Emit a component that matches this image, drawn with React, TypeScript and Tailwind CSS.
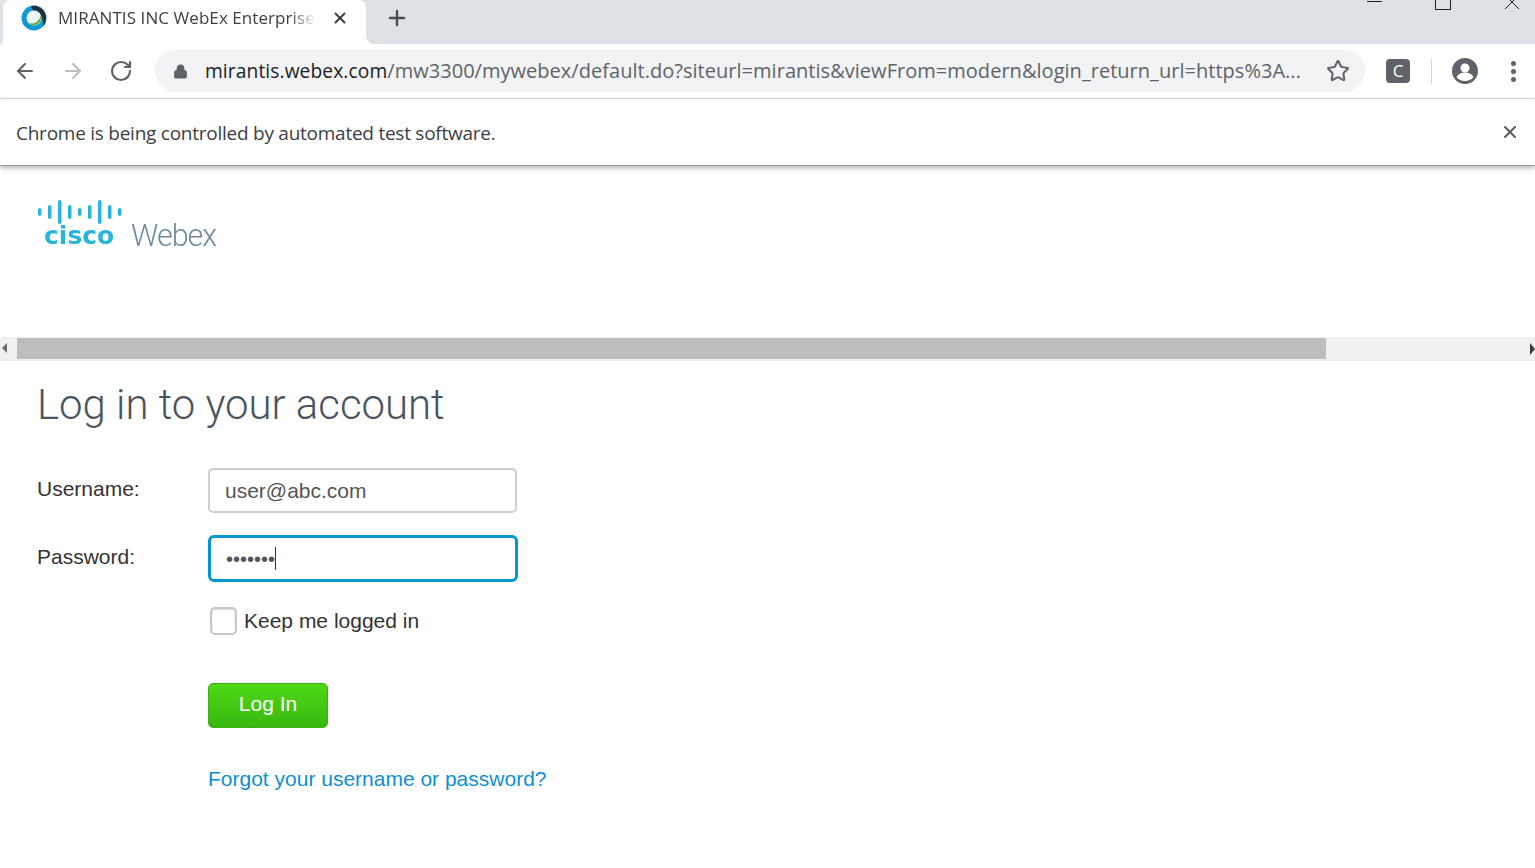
import { ArrowLeft, ArrowRight, RotateCw, Star, X, Plus, Lock } from 'lucide-react';

const uiFont = "font-['Open_Sans','Noto_Sans',sans-serif]";
const pageFont = "font-['Liberation_Sans',Arial,sans-serif]";

function WebexFavicon() {
  return (
    <svg width="26" height="26" viewBox="0 0 26 26">
      <circle cx="13" cy="13" r="12.500" fill="#0f9ad6" />
      <path d="M10 1a12.500 12.500 0 0 1 12 20.500c1-5-1-11-5-13-2-1.500-5-2-7-7.500z" fill="#22303b" />
      <circle cx="13" cy="13" r="7.500" fill="#eef6fa" />
      <path d="M20 10c1 5-2 10-7 10.500-2.500 0-4-1-5-2.500 3 1 6 .5 8-1.500 2-1.500 3-3.500 4-6.500z" fill="#5fb336" />
    </svg>
  );
}

function ChromeTabs() {
  return (
    <div className="flex h-11 bg-[#dee1e6]">
      <div className="w-[3px] bg-white">
        <div className="h-full rounded-br-lg bg-[#dee1e6]" />
      </div>
      <div className="flex h-11 w-[363px] items-center rounded-t-lg bg-white pb-2 pl-[18px] pr-[17px]">
        <WebexFavicon />
        <span className={`ml-[11px] w-[258px] overflow-hidden whitespace-nowrap text-[17px] tracking-[0.07px] text-[#3c4043] [mask-image:linear-gradient(to_right,#000_90%,transparent)] ${uiFont}`}>
          MIRANTIS INC WebEx Enterprise
        </span>
        <X className="ml-auto h-[18px] w-[18px] text-[#3c4043]" strokeWidth={2.6} />
      </div>
      <div className="flex-1 bg-white">
        <div className="flex h-full rounded-bl-lg bg-[#dee1e6]">
          <div className="ml-[19px] flex h-9 items-center">
            <Plus className="h-6 w-6 text-[#4a4d51]" strokeWidth={2.4} />
          </div>
          <div className="ml-auto flex h-[10px] items-start overflow-hidden text-[#222]">
            <div className="mt-px h-px w-[15px] bg-[#222]" />
            <div className="ml-[53px] -mt-2 h-[18px] w-[16px] border border-[#222]" />
            <svg className="ml-[53px] mr-[15px]" width="16" height="10" viewBox="0 0 16 10">
              <path d="M1 -5 L15 9 M15 -5 L1 9" stroke="#222" strokeWidth="1" fill="none" />
            </svg>
          </div>
        </div>
      </div>
    </div>
  );
}

function AddressBar() {
  return (
    <div className="flex h-[55px] items-center border-b border-[#dadce0] bg-white">
      <ArrowLeft className="ml-[13px] h-6 w-6 text-[#5f6368]" strokeWidth={2} />
      <ArrowRight className="ml-6 h-6 w-6 text-[#bcbec1]" strokeWidth={2} />
      <RotateCw className="ml-6 h-6 w-6 text-[#5f6368]" strokeWidth={2.2} />
      <div className="ml-[22px] flex h-[42px] w-[1210px] items-center rounded-full bg-[#f1f3f4] pl-[18px] pr-[15px]">
        <Lock className="h-[15px] w-[15px] fill-[#5f6368] text-[#5f6368]" strokeWidth={2.4} />
        <span className={`ml-[17px] w-[1110px] overflow-hidden whitespace-nowrap text-[20px] tracking-[0.03px] text-[#5f6368] ${uiFont}`}>
          <span className="text-[19.2px] tracking-[0.1px] text-[#202124]">mirantis.webex.com</span>
          /mw3300/mywebex/default.do?siteurl=mirantis&viewFrom=modern&login_return_url=https%3A...
        </span>
        <Star className="ml-auto h-6 w-6 text-[#5f6368]" strokeWidth={2} />
      </div>
      <div className={`ml-[21px] flex h-6 w-6 items-center justify-center rounded-sm bg-[#5f6368] text-[17px] text-white ${uiFont}`}>
        C
      </div>
      <div className="ml-[21px] h-[25px] w-px bg-[#d3d5d8]" />
      <svg className="ml-[20px]" width="26" height="26" viewBox="0 0 26 26">
        <circle cx="13" cy="13" r="13" fill="#5f6368" />
        <circle cx="13" cy="10" r="4.500" fill="#fff" />
        <path d="M4.500 19c2-3.500 5-4.500 8.500-4.500s6.500 1 8.500 4.500c-2 2.500-5 4-8.500 4s-6.500-1.500-8.500-4z" fill="#fff" />
      </svg>
      <div className="ml-[33px] flex flex-col gap-[3px]">
        <div className="h-[5px] w-[5px] rounded-full bg-[#5f6368]" />
        <div className="h-[5px] w-[5px] rounded-full bg-[#5f6368]" />
        <div className="h-[5px] w-[5px] rounded-full bg-[#5f6368]" />
      </div>
    </div>
  );
}

function AutomationBar() {
  return (
    <div className="relative flex h-[67px] items-center justify-between border-b border-[#9a9a9a] bg-white pl-4 pr-[15px] shadow-[0_2px_5px_rgba(0,0,0,0.3)]">
      <span className={`mt-[2px] text-[19px] tracking-[-0.25px] text-[#3c4043] ${uiFont}`}>
        Chrome is being controlled by automated test software.
      </span>
      <X className="h-5 w-5 text-[#5f6368]" strokeWidth={2.6} />
    </div>
  );
}

function CiscoLogo() {
  const bars = [
    [0, 8],
    [10, 14],
    [20, 24],
    [30, 14],
    [40, 8],
    [50, 14],
    [60, 24],
    [70, 14],
    [80, 8],
  ];
  return (
    <div className="flex items-end blur-[0.5px]">
      <div className="flex w-[94px] flex-col items-start">
        <svg width="88" height="24" viewBox="0 0 88 24">
          {bars.map(([x, h], i) => (
            <rect key={i} x={x + 1} y={12 - h / 2} width="3.500" height={h} rx="1.700" fill="#29b5d9" />
          ))}
        </svg>
        <span className="-mt-[1px] ml-[7px] font-['DejaVu_Sans',sans-serif] text-[25px] font-bold leading-[26px] text-[#29b5d9]">
          cisco
        </span>
      </div>
      <span className="-mb-[2px] text-[30.5px] font-light leading-[30px] tracking-[-1px] text-[#6f8ba0] font-['Roboto',sans-serif]">
        Webex
      </span>
    </div>
  );
}

function FakeScrollbar() {
  return (
    <div className="flex h-6 items-start bg-[#f0f0f0] pt-px">
      <div className="ml-[2px] mt-[5px] h-0 w-0 border-y-[5px] border-r-[5px] border-y-transparent border-r-[#6a6a6a]" />
      <div className="ml-[10px] h-[21px] w-[1309px] bg-[#bdbdbd]" />
      <div className="ml-auto mt-[5px] h-0 w-0 border-y-[6px] border-l-[5px] border-y-transparent border-l-[#3d3d3d]" />
    </div>
  );
}

function LoginForm() {
  return (
    <div className={`pl-[37px] text-[#333] ${pageFont}`}>
      <h1 className="mt-[17px] text-[41.9px] font-light leading-[54px] text-[#4a5560] font-['Roboto',sans-serif]">
        Log in to your account
      </h1>
      <div className="mt-[36px] grid grid-cols-[171px_1fr] items-center text-[21px]">
        <label className="mb-1 text-[#333]">Username:</label>
        <div className="flex h-[45px] w-[309px] items-center rounded-[5px] border-2 border-[#cfcfcf] pl-[15px] text-[#555]">
          user@abc.com
        </div>
        <label className="mb-1 mt-[22px] text-[#333]">Password:</label>
        <div className="mt-[22px] flex h-[47px] w-[310px] items-center rounded-[6px] border-[3px] border-[#0095d3] pl-[15px]">
          <span className="text-[20px] leading-none text-[#555]">•••••••</span>
          <span className="h-[23px] w-px bg-[#333]" />
        </div>
        <div />
        <label className="mt-[25px] flex h-7 items-center leading-7">
          <span className="ml-[2px] h-7 w-[27px] rounded-[5px] border-2 border-[#c8c8c8] shadow-[inset_0_1px_2px_rgba(0,0,0,0.15)]" />
          <span className="ml-[7px]">Keep me logged in</span>
        </label>
        <div />
        <button className="mt-[48px] h-[45px] w-[120px] rounded-[5px] border border-[#3fae15] bg-gradient-to-b from-[#4fd916] to-[#38b80f] pb-[3px] text-white">
          Log In
        </button>
        <div />
        <a className="mt-[36px] leading-[30px] text-[#0f8fd0]">Forgot your username or password?</a>
      </div>
    </div>
  );
}

export default function App() {
  return (
    <div className="h-[868px] w-[1535px] overflow-hidden bg-white">
      <ChromeTabs />
      <AddressBar />
      <AutomationBar />
      <div className="h-[171px] pl-[37px] pt-[34px]">
        <CiscoLogo />
      </div>
      <FakeScrollbar />
      <LoginForm />
    </div>
  );
}
